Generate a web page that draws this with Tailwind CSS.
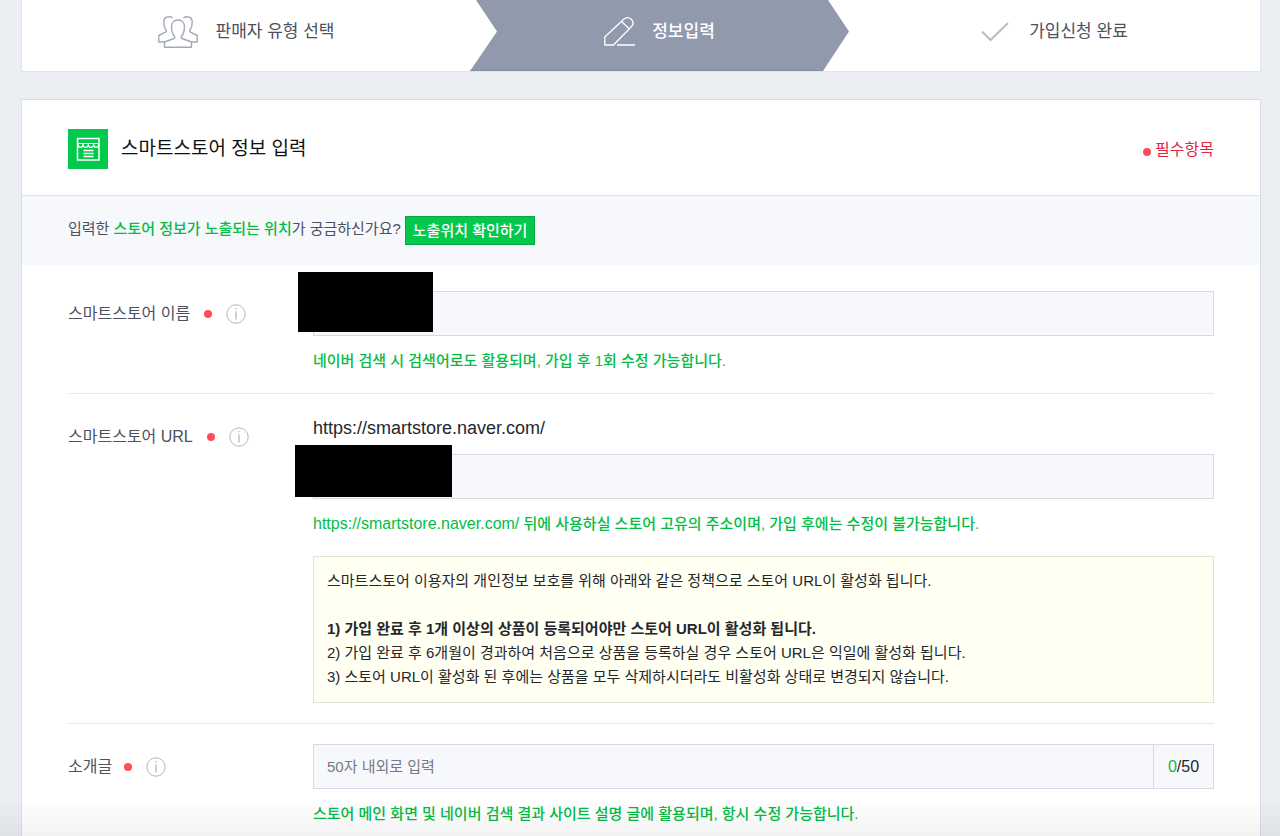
<!DOCTYPE html>
<html lang="ko">
<head>
    <meta charset="UTF-8">
    <meta name="viewport" content="width=device-width, initial-scale=1.0">
    <title>스마트스토어 정보 입력</title>
    <script src="https://cdn.jsdelivr.net/npm/@tailwindcss/browser@4"></script>
</head>
<body class="bg-[#ebeff4] h-screen overflow-hidden font-['Liberation_Sans','Noto_Sans_CJK_KR',sans-serif] text-[15px] leading-6 text-[#24272e]">
    <div class="pl-[21px] pr-[19px]">
        <!-- steps -->
        <ol class="grid grid-cols-[448fr_379fr_411fr] h-[72px] bg-white border-x border-b border-[#e0e4ec] text-[17px] text-[#4c5160]">
            <li class="flex items-center justify-center gap-[18px] pb-2">
                <svg class="w-10 h-8" viewBox="0 0 40 32" fill="none" stroke="#a3a9ba" stroke-width="1.4" stroke-linejoin="round">
                    <path d="M16.500 20.500c.600.800.500 1.500-.500 2L6.500 26v5.300h27V26L24 22.500c-1-.500-1.100-1.200-.500-2 2.200-2.800 3-5.500 3-9.500s-2.500-7-6.500-7-6.500 3-6.500 7 .800 6.700 3 9.500z"/>
                    <path d="M14.500 2C13.500 1.100 12.500.800 11 .800 7.700.800 5.800 2.800 5.800 6.500c0 3.300.500 5.500 2.200 7.500.600.800.500 1.700-.500 2.200L.800 19.500V26h5.700M25.500 2C26.500 1.100 27.500.800 29 .800c3.300 0 5.200 2 5.200 5.700 0 3.300-.500 5.500-2.200 7.500-.600.800-.500 1.700.500 2.200l6.700 3.300V26h-5.700"/>
                </svg>
                <span>판매자 유형 선택</span>
            </li>
            <li class="relative flex items-center justify-center gap-4 pb-2 font-medium text-white" aria-current="step">
                <svg class="absolute inset-0 w-full h-full" viewBox="0 0 379 71" preserveAspectRatio="none">
                    <path d="M6 0h352l21 31.500L353 71H0l27-39.500z" fill="#9199ad"/>
                    <path d="M0 70.500h353" stroke="#858da4"/>
                </svg>
                <svg class="relative w-8 h-8" viewBox="0 0 32 32" fill="none" stroke="#fff" stroke-width="1.300" stroke-linejoin="round">
                    <path d="M.800 21 19.500 3.500c2-2 5-2.500 7.500-.500 2.500 2.500 2.500 5.500.500 7.500L9.500 29H.800zM17.500 5.500l8 7.500M13 29h18"/>
                </svg>
                <span class="relative">정보입력</span>
            </li>
            <li class="flex items-center justify-center gap-5 pb-2">
                <svg class="w-7 h-5" viewBox="0 0 28 20" fill="none" stroke="#b7bcc9" stroke-width="2">
                    <path d="M1 9.500 9.500 18 27 1"/>
                </svg>
                <span>가입신청 완료</span>
            </li>
        </ol>

        <section class="mt-[27px] bg-white border border-[#d9dde5]">
            <div class="flex items-center justify-between h-24 px-[46px] pt-0.5 border-b border-[#dfe3ea]">
                <div class="flex items-center gap-[13px]">
                    <svg class="w-10 h-10" viewBox="0 0 40 40" fill="none" stroke="#fff">
                        <path fill="#03c84b" stroke="none" d="M0 0h40v40H0z"/>
                        <path stroke-width="1.500" d="M9.500 9.500h21.500v21.500H9.500z"/>
                        <path stroke-width="1.200" d="M9.500 14.500h21.500M10 15c0 4.500 5 4.500 5 0 0 4.500 5.300 4.500 5.300 0 0 4.500 5.300 4.500 5.300 0 0 4.500 5 4.500 5 0"/>
                        <path stroke-width="1.300" d="M15.500 21.500h10M15.500 24.500h10M15.500 27.500h10"/>
                    </svg>
                    <h1 class="text-[19px] text-[#111]">스마트스토어 정보 입력</h1>
                </div>
                <p class="flex items-center gap-1 pt-0.5 text-base text-[#e32642]"><span class="w-2 h-2 mt-1 rounded-full bg-[#ff4d57]"></span>필수항목</p>
            </div>

            <div class="flex items-center gap-1 h-[69px] px-[46px] bg-[#f7f8fc] text-[#4c5160]">
                <p class="pb-1">입력한 <span class="font-medium text-[#03bd46]">스토어 정보가 노출되는 위치</span>가 궁금하신가요?</p>
                <button type="button" class="h-[29px] px-[7px] bg-[#03c84b] border border-[#06a942] font-medium text-white">노출위치 확인하기</button>
            </div>

            <form class="px-[46px] pt-[6px]">
                <div class="flex py-5 border-b border-[#e6e8ee]">
                    <div class="flex items-center w-[245px] h-[45px] shrink-0 text-base text-[#4c5160]">
                        <label for="storeName">스마트스토어 이름</label>
                        <span class="w-2 h-2 ml-[14px] rounded-full bg-[#ff4d57]"></span>
                        <button type="button" class="ml-[14px]" aria-label="스마트스토어 이름 도움말">
                            <svg class="w-5 h-5" viewBox="0 0 20 20" fill="none" stroke="#b0b5c4"><circle cx="10" cy="10" r="9.200"/><path stroke-width="1.200" d="M10 4v1.600M10 7.300v8.200"/></svg>
                        </button>
                    </div>
                    <div class="relative grow">
                        <input id="storeName" type="text" class="block w-full h-[45px] px-[13px] bg-[#f7f8fc] border border-[#d7dae2] outline-none">
                        <div class="absolute -left-[15px] -top-[19px] w-[135px] h-[60px] bg-black"></div>
                        <p class="mt-[13px] font-medium text-[#03bd46]">네이버 검색 시 검색어로도 활용되며, 가입 후 1회 수정 가능합니다.</p>
                    </div>
                </div>

                <div class="flex py-5 border-b border-[#e6e8ee]">
                    <div class="flex items-center w-[245px] h-[45px] shrink-0 text-base text-[#4c5160]">
                        <label for="storeUrl">스마트스토어 URL</label>
                        <span class="w-2 h-2 ml-[14px] rounded-full bg-[#ff4d57]"></span>
                        <button type="button" class="ml-[14px]" aria-label="스마트스토어 URL 도움말">
                            <svg class="w-5 h-5" viewBox="0 0 20 20" fill="none" stroke="#b0b5c4"><circle cx="10" cy="10" r="9.200"/><path stroke-width="1.200" d="M10 4v1.600M10 7.300v8.200"/></svg>
                        </button>
                    </div>
                    <div class="grow">
                        <p class="pt-0.5 text-lg leading-6">https://smartstore.naver.com/</p>
                        <div class="relative mt-[14px]">
                            <input id="storeUrl" type="text" class="block w-full h-[45px] px-[13px] bg-[#f7f8fc] border border-[#d7dae2] outline-none">
                            <div class="absolute -left-[18px] -top-[9px] w-[157px] h-[52px] bg-black"></div>
                        </div>
                        <p class="mt-[13px] font-medium text-[#03bd46]"><span class="text-base leading-6">https://smartstore.naver.com/</span> 뒤에 사용하실 스토어 고유의 주소이며, 가입 후에는 수정이 불가능합니다.</p>
                        <div class="mt-5 px-[13px] pt-3 pb-[13px] bg-[#fffff2] border border-[#e3e3d3]">
                            <p>스마트스토어 이용자의 개인정보 보호를 위해 아래와 같은 정책으로 스토어 URL이 활성화 됩니다.</p>
                            <p class="mt-6 font-bold">1) 가입 완료 후 1개 이상의 상품이 등록되어야만 스토어 URL이 활성화 됩니다.</p>
                            <p>2) 가입 완료 후 6개월이 경과하여 처음으로 상품을 등록하실 경우 스토어 URL은 익일에 활성화 됩니다.</p>
                            <p>3) 스토어 URL이 활성화 된 후에는 상품을 모두 삭제하시더라도 비활성화 상태로 변경되지 않습니다.</p>
                        </div>
                    </div>
                </div>

                <div class="flex py-5">
                    <div class="flex items-center w-[245px] h-[45px] shrink-0 text-base text-[#4c5160]">
                        <label for="intro">소개글</label>
                        <span class="w-2 h-2 ml-3 rounded-full bg-[#ff4d57]"></span>
                        <button type="button" class="ml-[14px]" aria-label="소개글 도움말">
                            <svg class="w-5 h-5" viewBox="0 0 20 20" fill="none" stroke="#b0b5c4"><circle cx="10" cy="10" r="9.200"/><path stroke-width="1.200" d="M10 4v1.600M10 7.300v8.200"/></svg>
                        </button>
                    </div>
                    <div class="grow">
                        <div class="flex h-[45px] bg-[#f7f8fc] border border-[#d7dae2]">
                            <input id="intro" type="text" placeholder="50자 내외로 입력" class="grow px-[13px] placeholder:text-[#747986] outline-none">
                            <span class="flex items-center justify-center w-[60px] border-l border-[#d7dae2] text-base"><span class="text-[#03bd46]">0</span>/50</span>
                        </div>
                        <p class="mt-[13px] font-medium text-[#03bd46]">스토어 메인 화면 및 네이버 검색 결과 사이트 설명 글에 활용되며, 항시 수정 가능합니다.</p>
                    </div>
                </div>
            </form>
        </section>
    </div>
    <!-- bottom fade -->
    <div class="fixed inset-x-0 bottom-0 h-9 bg-linear-to-b from-transparent to-black/5 pointer-events-none"></div>
</body>
</html>
